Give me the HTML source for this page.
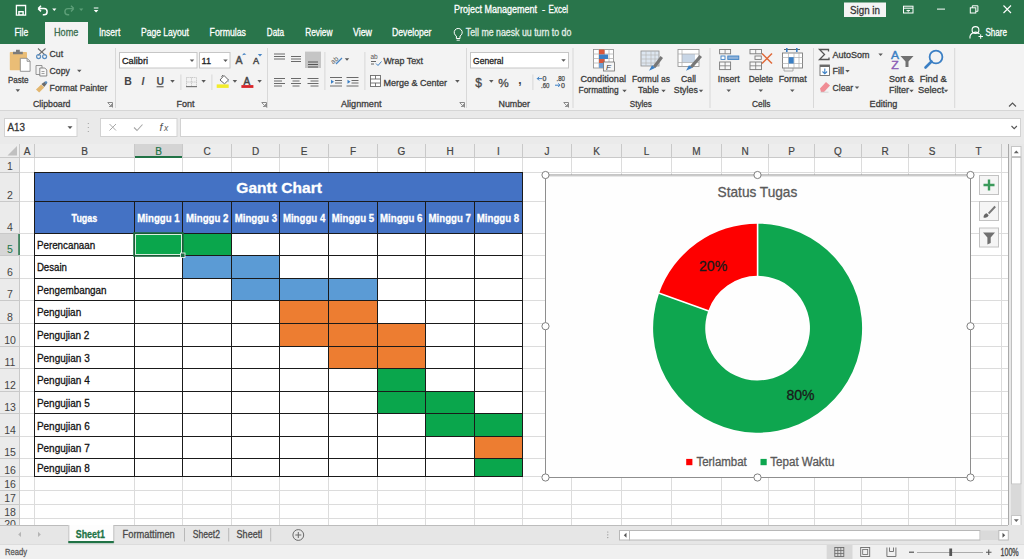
<!DOCTYPE html>
<html><head><meta charset="utf-8">
<style>
html,body{margin:0;padding:0;width:1024px;height:559px;overflow:hidden;background:#fff}
svg{display:block}
text{font-family:"Liberation Sans",sans-serif}
</style></head><body>
<svg width="1024" height="559" viewBox="0 0 1024 559">
<rect x="0" y="0" width="1024" height="44" fill="#29754b"/>
<rect x="45" y="22" width="43" height="22" fill="#f3f3f3"/>
<text x="454" y="12.9" font-size="10.2" fill="#fff" stroke="#fff" stroke-width="0.3" textLength="83" lengthAdjust="spacingAndGlyphs">Project Management</text>
<text x="542" y="12.9" font-size="10.2" fill="#fff" stroke="#fff" stroke-width="0.3" textLength="3.2" lengthAdjust="spacingAndGlyphs">-</text>
<text x="548.6" y="12.9" font-size="10.2" fill="#fff" stroke="#fff" stroke-width="0.3" textLength="19.5" lengthAdjust="spacingAndGlyphs">Excel</text>
<text x="14.4" y="36.2" font-size="10.6" fill="#fff" stroke="#fff" stroke-width="0.3" textLength="13.8" lengthAdjust="spacingAndGlyphs">File</text>
<text x="99" y="36.2" font-size="10.6" fill="#fff" stroke="#fff" stroke-width="0.3" textLength="21.3" lengthAdjust="spacingAndGlyphs">Insert</text>
<text x="141" y="36.2" font-size="10.6" fill="#fff" stroke="#fff" stroke-width="0.3" textLength="48" lengthAdjust="spacingAndGlyphs">Page Layout</text>
<text x="209.6" y="36.2" font-size="10.6" fill="#fff" stroke="#fff" stroke-width="0.3" textLength="36.4" lengthAdjust="spacingAndGlyphs">Formulas</text>
<text x="266.8" y="36.2" font-size="10.6" fill="#fff" stroke="#fff" stroke-width="0.3" textLength="17.2" lengthAdjust="spacingAndGlyphs">Data</text>
<text x="305.2" y="36.2" font-size="10.6" fill="#fff" stroke="#fff" stroke-width="0.3" textLength="27.3" lengthAdjust="spacingAndGlyphs">Review</text>
<text x="353" y="36.2" font-size="10.6" fill="#fff" stroke="#fff" stroke-width="0.3" textLength="19" lengthAdjust="spacingAndGlyphs">View</text>
<text x="392" y="36.2" font-size="10.6" fill="#fff" stroke="#fff" stroke-width="0.3" textLength="39.5" lengthAdjust="spacingAndGlyphs">Developer</text>
<text x="54" y="36.2" font-size="10.6" fill="#3a6e50" stroke="#3a6e50" stroke-width="0.3" textLength="24.4" lengthAdjust="spacingAndGlyphs">Home</text>
<text x="465.8" y="36.2" font-size="10.6" fill="#e3efe8" stroke="#e3efe8" stroke-width="0.3" textLength="105.5" lengthAdjust="spacingAndGlyphs">Tell me naesk uu turn to do</text>
<text x="985.4" y="36.2" font-size="10.6" fill="#fff" stroke="#fff" stroke-width="0.3" textLength="21.6" lengthAdjust="spacingAndGlyphs">Share</text>
<rect x="844" y="2.5" width="42" height="14.5" fill="#f4f4f4"/>
<text x="850" y="13.8" font-size="11.5" fill="#333" stroke="#333" stroke-width="0.3" textLength="30" lengthAdjust="spacingAndGlyphs">Sign in</text>
<rect x="0" y="44" width="1024" height="66" fill="#f3f3f3"/>
<rect x="0" y="110" width="1024" height="1" fill="#d6d6d6"/>
<rect x="9.8" y="51.9" width="17.2" height="18.3" rx="0.8" fill="#eabd76"/>
<path d="M13 54.2h9.8v-2.4h-3v-2h-3.8v2h-3z" fill="#7b7b7b"/>
<path d="M20.3 58.3h6.8l3 3v10h-9.8z" fill="#fff" stroke="#8a8a8a" stroke-width="0.9"/>
<path d="M27.1 58.3v3h3" fill="none" stroke="#8a8a8a" stroke-width="0.9"/>
<text x="7.9" y="82.5" font-size="9.2" fill="#3c3c3c" stroke="#3c3c3c" stroke-width="0.3" textLength="20.5" lengthAdjust="spacingAndGlyphs">Paste</text>
<path d="M15.55 89.30h4.5l-2.25 2.6z" fill="#5a5a5a"/>
<g fill="none" stroke="#6b6b6b" stroke-width="1.1"><path d="M38 48.5l7.5 6.8M45.5 48.5l-7.5 6.8"/></g>
<g fill="none" stroke="#5a8ec0" stroke-width="1.2"><circle cx="38.6" cy="56.6" r="2"/><circle cx="44.6" cy="56.6" r="2"/></g>
<text x="49.6" y="57.1" font-size="9.2" fill="#3c3c3c" stroke="#3c3c3c" stroke-width="0.3" textLength="13.5" lengthAdjust="spacingAndGlyphs">Cut</text>
<path d="M36 65.5h6v9h-6z" fill="#f3f3f3" stroke="#8a8a8a" stroke-width="0.9"/>
<path d="M39.8 68h5l2 2v6h-7z" fill="#f7f7f7" stroke="#7a7a7a" stroke-width="0.9"/>
<path d="M41.5 71.5h3M41.5 73.5h3" stroke="#8a8a8a" stroke-width="0.8"/>
<text x="49.6" y="73.6" font-size="9.2" fill="#3c3c3c" stroke="#3c3c3c" stroke-width="0.3" textLength="20.2" lengthAdjust="spacingAndGlyphs">Copy</text>
<path d="M77.05 69.70h4.5l-2.25 2.6z" fill="#5a5a5a"/>
<path d="M36 89.5l5.2-5 3 3-5 5z" fill="#e2b66f"/>
<path d="M41.5 84l3.5-2.5 2 2-2.8 3.4z" fill="#6b6b6b"/><circle cx="46" cy="82.5" r="1.3" fill="#5a8ec0"/>
<text x="49.6" y="90.7" font-size="9.2" fill="#3c3c3c" stroke="#3c3c3c" stroke-width="0.3" textLength="57.8" lengthAdjust="spacingAndGlyphs">Format Painter</text>
<text x="32.9" y="106.8" font-size="9.2" fill="#3c3c3c" stroke="#3c3c3c" stroke-width="0.3" textLength="37.6" lengthAdjust="spacingAndGlyphs">Clipboard</text>
<path d="M107.5 102.5h5v5" fill="none" stroke="#888" stroke-width="1"/><path d="M108 103l3.5 3.5M111.5 104v2.5h-2.5" fill="none" stroke="#888" stroke-width="0.9"/>
<rect x="115" y="48" width="1" height="60" fill="#d8d8d8"/>
<rect x="119.5" y="52.5" width="77.5" height="15.5" fill="#fff" stroke="#c6c6c6"/>
<rect x="199.5" y="52.5" width="30.5" height="15.5" fill="#fff" stroke="#c6c6c6"/>
<text x="122" y="63.5" font-size="9.2" fill="#222" stroke="#222" stroke-width="0.3" textLength="26" lengthAdjust="spacingAndGlyphs">Calibri</text>
<path d="M189.75 59.50h4.5l-2.25 2.6z" fill="#5a5a5a"/>
<text x="201.5" y="63.5" font-size="9.2" fill="#222" stroke="#222" stroke-width="0.3" textLength="9.5" lengthAdjust="spacingAndGlyphs">11</text>
<path d="M223.25 59.50h4.5l-2.25 2.6z" fill="#5a5a5a"/>
<text x="235.5" y="64" font-size="10.5" fill="#4a4a4a" stroke="#4a4a4a" stroke-width="0.45">A</text><path d="M242 55.2l2-2.2 2.4 1.6z" fill="#4a86c5"/>
<text x="253" y="64" font-size="9.2" fill="#4a4a4a" stroke="#4a4a4a" stroke-width="0.45">A</text><path d="M257.8 54h4.4l-2.2 2.4z" fill="#4a86c5"/>
<text x="124.2" y="85.3" font-size="10.5" font-weight="bold" fill="#444">B</text>
<text x="141.5" y="85.3" font-size="10.5" font-style="italic" font-weight="bold" fill="#505050">I</text>
<text x="156.5" y="85" font-size="10.5" font-weight="bold" fill="#505050">U</text><rect x="156.6" y="86.2" width="7" height="1.1" fill="#555"/>
<path d="M170.25 80.10h4.5l-2.25 2.6z" fill="#5a5a5a"/>
<rect x="180.4" y="74.5" width="1" height="15.5" fill="#d8d8d8"/>
<g stroke="#c4c4c4" stroke-width="0.9" fill="none" stroke-dasharray="1.2 0.6"><path d="M186.5 77.5h10v9M186.5 77.5v9M191.5 77.5v9M186.5 82h10"/></g><rect x="186" y="86" width="11" height="1.2" fill="#777"/>
<path d="M201.35 80.10h4.5l-2.25 2.6z" fill="#5a5a5a"/>
<rect x="211.4" y="74.5" width="1" height="15.5" fill="#d8d8d8"/>
<path d="M220 80l4-4.5 4.5 4.5-4 3.8z" fill="#fff" stroke="#555" stroke-width="0.9"/><path d="M221.5 76.8l1.5-1.8" stroke="#555" stroke-width="0.9"/><path d="M228.5 79.5q1 1.5 0 3" fill="#4a86c5"/>
<rect x="216.7" y="84.4" width="12" height="3.5" fill="#f2ec2a"/>
<path d="M232.65 80.10h4.5l-2.25 2.6z" fill="#5a5a5a"/>
<text x="243.6" y="84.5" font-size="10" fill="#444" stroke="#444" stroke-width="0.45">A</text><rect x="241.4" y="85.1" width="12" height="2.8" fill="#d9252a"/>
<path d="M257.35 80.10h4.5l-2.25 2.6z" fill="#5a5a5a"/>
<text x="176.4" y="106.8" font-size="9.2" fill="#3c3c3c" stroke="#3c3c3c" stroke-width="0.3" textLength="18" lengthAdjust="spacingAndGlyphs">Font</text>
<path d="M261.5 102.5h5v5" fill="none" stroke="#888" stroke-width="1"/><path d="M262 103l3.5 3.5M265.5 104v2.5h-2.5" fill="none" stroke="#888" stroke-width="0.9"/>
<rect x="267" y="48" width="1" height="60" fill="#d8d8d8"/>
<g stroke="#6a6a6a" stroke-width="1"><path d="M274 54h11M274 56.5h11M274 59h11"/><path d="M291 56.5h10M291 59h10M291 61.5h10"/></g>
<rect x="305" y="51.6" width="16" height="16.4" fill="#c5c5c5"/>
<path d="M308 62h10M308 64.5h10M308 67h10" stroke="#555" stroke-width="1"/>
<text x="330" y="62" font-size="7" fill="#555" transform="rotate(-40 335 59)">ab</text><path d="M336 64l6-6" stroke="#4a86c5" stroke-width="1.2"/>
<path d="M344.75 58.20h4.5l-2.25 2.6z" fill="#5a5a5a"/>
<rect x="324.4" y="52" width="1" height="38" fill="#d8d8d8"/>
<g stroke="#6a6a6a" stroke-width="1"><path d="M274 78.5h11M274 81h8M274 83.5h11M274 86h8"/><path d="M291 78.5h10M292.5 81h7M291 83.5h10M292.5 86h7"/><path d="M307.5 78.5h11M310.5 81h8M307.5 83.5h11M310.5 86h8"/></g>
<g stroke="#6a6a6a" stroke-width="1"><path d="M330 77.5h12M335 80.5h7M335 83h7M330 86h12"/><path d="M346.5 77.5h12M351.5 80.5h7M351.5 83h7M346.5 86h12"/></g>
<path d="M334 81.8l-3-2v4z" fill="#3b7fc4"/><path d="M347.5 79.8l3 2-3 2z" fill="#3b7fc4"/>
<rect x="364.4" y="52" width="1" height="38" fill="#d8d8d8"/>
<text x="370.5" y="58.5" font-size="6.5" fill="#555">ab</text><path d="M371 61.5h5M371 64h3" stroke="#555" stroke-width="0.9"/><path d="M376 63.5l2 2 3.5-4" fill="none" stroke="#3b7fc4" stroke-width="1"/>
<text x="383.4" y="63.5" font-size="9.2" fill="#3c3c3c" stroke="#3c3c3c" stroke-width="0.3" textLength="39.6" lengthAdjust="spacingAndGlyphs">Wrap Text</text>
<rect x="370.5" y="75.5" width="10" height="11" fill="#fff" stroke="#6a6a6a" stroke-width="0.9"/><path d="M370.5 79h10M370.5 83h10M375.5 75.5v3.5M375.5 83v3.5" stroke="#6a6a6a" stroke-width="0.9"/>
<text x="383.4" y="85.5" font-size="9.2" fill="#3c3c3c" stroke="#3c3c3c" stroke-width="0.3" textLength="63.6" lengthAdjust="spacingAndGlyphs">Merge &amp; Center</text>
<path d="M455.15 80.10h4.5l-2.25 2.6z" fill="#5a5a5a"/>
<text x="341" y="106.8" font-size="9.2" fill="#3c3c3c" stroke="#3c3c3c" stroke-width="0.3" textLength="40.5" lengthAdjust="spacingAndGlyphs">Alignment</text>
<path d="M459.5 102.5h5v5" fill="none" stroke="#888" stroke-width="1"/><path d="M460 103l3.5 3.5M463.5 104v2.5h-2.5" fill="none" stroke="#888" stroke-width="0.9"/>
<rect x="466" y="48" width="1" height="60" fill="#d8d8d8"/>
<rect x="470.5" y="52.5" width="98" height="15.5" fill="#fff" stroke="#c6c6c6"/>
<text x="473" y="63.5" font-size="9.2" fill="#222" stroke="#222" stroke-width="0.3" textLength="30.5" lengthAdjust="spacingAndGlyphs">General</text>
<path d="M561.25 59.20h4.5l-2.25 2.6z" fill="#5a5a5a"/>
<text x="475.2" y="86.8" font-size="12" fill="#4a4a4a" stroke="#4a4a4a" stroke-width="0.3">$</text>
<path d="M489.05 80.10h4.5l-2.25 2.6z" fill="#5a5a5a"/>
<text x="498.3" y="86.5" font-size="11.5" fill="#4a4a4a" stroke="#4a4a4a" stroke-width="0.3" textLength="10.5" lengthAdjust="spacingAndGlyphs">%</text>
<text x="518.3" y="83.5" font-size="12" font-weight="bold" fill="#444">,</text>
<rect x="532.4" y="74.5" width="1" height="15.5" fill="#d8d8d8"/>
<text x="542.5" y="81.2" font-size="7" fill="#4a4a4a" stroke="#4a4a4a" stroke-width="0.25">0</text><text x="541" y="87.8" font-size="7" fill="#4a4a4a" stroke="#4a4a4a" stroke-width="0.25" textLength="8.5" lengthAdjust="spacingAndGlyphs">.60</text><path d="M537.3 78.6h5M537.3 78.6l1.8-1.8M537.3 78.6l1.8 1.8" stroke="#3b7fc4" stroke-width="1" fill="none"/>
<text x="556.5" y="81.2" font-size="7" fill="#4a4a4a" stroke="#4a4a4a" stroke-width="0.25" textLength="8.5" lengthAdjust="spacingAndGlyphs">.80</text><text x="561" y="87.8" font-size="7" fill="#4a4a4a" stroke="#4a4a4a" stroke-width="0.25">0</text><path d="M555 85.2h5M560 85.2l-1.8-1.8M560 85.2l-1.8 1.8" stroke="#3b7fc4" stroke-width="1" fill="none"/>
<text x="498.5" y="106.8" font-size="9.2" fill="#3c3c3c" stroke="#3c3c3c" stroke-width="0.3" textLength="31.5" lengthAdjust="spacingAndGlyphs">Number</text>
<path d="M563.5 102.5h5v5" fill="none" stroke="#888" stroke-width="1"/><path d="M564 103l3.5 3.5M567.5 104v2.5h-2.5" fill="none" stroke="#888" stroke-width="0.9"/>
<rect x="572.5" y="48" width="1" height="60" fill="#d8d8d8"/>
<g fill="#fff" stroke="#8c8c8c" stroke-width="0.8"><rect x="593.5" y="49.5" width="20" height="18.5"/></g>
<path d="M593.5 54h20M593.5 58.5h20M593.5 63h20M599 49.5v18.5M604.5 49.5v18.5M609 49.5v18.5" stroke="#b5b5b5" stroke-width="0.8"/>
<rect x="599" y="49.5" width="5.5" height="5" fill="#d9573b"/><rect x="599" y="54.5" width="9" height="4.5" fill="#3b7fc4"/><rect x="599" y="59" width="5.5" height="4" fill="#d9573b"/><rect x="599" y="63" width="5.5" height="5" fill="#6f9fd3"/>
<rect x="603.5" y="62" width="11" height="9" fill="#f6f6f6" stroke="#707070" stroke-width="0.8"/><text x="606" y="69.8" font-size="8" font-style="italic" fill="#333" font-family="Liberation Serif">F</text>
<text x="580.4" y="82" font-size="9.2" fill="#3c3c3c" stroke="#3c3c3c" stroke-width="0.3" textLength="45.6" lengthAdjust="spacingAndGlyphs">Conditional</text>
<text x="578.6" y="93.4" font-size="9.2" fill="#3c3c3c" stroke="#3c3c3c" stroke-width="0.3" textLength="40" lengthAdjust="spacingAndGlyphs">Formatting</text>
<path d="M622.25 89.70h4.5l-2.25 2.6z" fill="#5a5a5a"/>
<rect x="641" y="51" width="18" height="15" fill="#dde6f0" stroke="#8c8c8c" stroke-width="0.8"/><path d="M641 55h18M641 59h18M641 63h18M646 51v15M651 51v15M655 51v15" stroke="#b8b8b8" stroke-width="0.7"/>
<path d="M649 70.7l3-5.5 3.5 2.5z" fill="#3b7fc4"/><path d="M653 66l7.5-10 2.5 2-7.5 10z" fill="#777"/>
<text x="632" y="82" font-size="9.2" fill="#3c3c3c" stroke="#3c3c3c" stroke-width="0.3" textLength="38" lengthAdjust="spacingAndGlyphs">Formul as</text>
<text x="638" y="93.4" font-size="9.2" fill="#3c3c3c" stroke="#3c3c3c" stroke-width="0.3" textLength="21" lengthAdjust="spacingAndGlyphs">Table</text>
<path d="M661.25 89.70h4.5l-2.25 2.6z" fill="#5a5a5a"/>
<rect x="678" y="49.5" width="21" height="17" fill="#fff" stroke="#8c8c8c" stroke-width="0.8"/><rect x="682" y="54" width="13" height="8.5" fill="#c8d6e6"/><path d="M678 54h21M678 62.5h21M682 49.5v17" stroke="#aaa" stroke-width="0.7"/>
<path d="M686 70.7l3-5.5 3.5 2.5z" fill="#3b7fc4"/><path d="M690 66l9.5-11 2.5 2-9.5 11z" fill="#777"/>
<text x="681" y="82" font-size="9.2" fill="#3c3c3c" stroke="#3c3c3c" stroke-width="0.3" textLength="15" lengthAdjust="spacingAndGlyphs">Call</text>
<text x="673.8" y="93.4" font-size="9.2" fill="#3c3c3c" stroke="#3c3c3c" stroke-width="0.3" textLength="24" lengthAdjust="spacingAndGlyphs">Styles</text>
<path d="M698.75 89.70h4.5l-2.25 2.6z" fill="#5a5a5a"/>
<text x="629.8" y="106.8" font-size="9.2" fill="#3c3c3c" stroke="#3c3c3c" stroke-width="0.3" textLength="22" lengthAdjust="spacingAndGlyphs">Styles</text>
<rect x="709.5" y="48" width="1" height="60" fill="#d8d8d8"/>
<g fill="#f7f7f7" stroke="#7a7a7a" stroke-width="0.9"><rect x="719.6" y="49.5" width="11" height="4.3"/><rect x="719.6" y="62" width="11" height="7.6"/></g><path d="M725.1 49.5v4.3M725.1 62v7.6M719.6 65.8h11" stroke="#7a7a7a" stroke-width="0.8"/>
<rect x="721" y="56" width="4" height="3.4" fill="#fff" stroke="#3b7fc4" stroke-width="0.9"/><rect x="727.8" y="56" width="11" height="3.4" fill="#8fb2d9" stroke="#3b7fc4" stroke-width="0.9"/>
<text x="717.7" y="82" font-size="9.2" fill="#3c3c3c" stroke="#3c3c3c" stroke-width="0.3" textLength="22" lengthAdjust="spacingAndGlyphs">Insert</text>
<path d="M726.45 89.50h4.5l-2.25 2.6z" fill="#5a5a5a"/>
<g fill="#f7f7f7" stroke="#7a7a7a" stroke-width="0.9"><rect x="750" y="49.5" width="11.5" height="4.3"/><rect x="755" y="56" width="6.3" height="3.4"/><rect x="750" y="62" width="11.5" height="7.6"/></g><path d="M755.7 49.5v4.3M755.7 62v7.6M750 65.8h11.5" stroke="#7a7a7a" stroke-width="0.8"/>
<path d="M762 53.5l10 10M772 53.5l-10 10" stroke="#e06a3a" stroke-width="1.5"/>
<text x="748.7" y="82" font-size="9.2" fill="#3c3c3c" stroke="#3c3c3c" stroke-width="0.3" textLength="24.3" lengthAdjust="spacingAndGlyphs">Delete</text>
<path d="M758.55 89.50h4.5l-2.25 2.6z" fill="#5a5a5a"/>
<rect x="782.5" y="53" width="20" height="15" fill="#fff" stroke="#7a7a7a" stroke-width="0.9"/><path d="M782.5 57.5h20M782.5 63.5h20M788.5 53v15M794 53v15M799 53v15" stroke="#b0b0b0" stroke-width="0.7"/><rect x="788.7" y="57.2" width="5" height="6.3" fill="#3b7fc4"/>
<path d="M784 49.5h16" stroke="#555" stroke-width="0.9"/><rect x="786" y="48" width="1.6" height="4" fill="#3b7fc4"/><rect x="796" y="48" width="1.6" height="4" fill="#3b7fc4"/>
<path d="M784 68v3h9v-3" fill="none" stroke="#9a9a9a" stroke-width="0.8"/>
<text x="778.7" y="82" font-size="9.2" fill="#3c3c3c" stroke="#3c3c3c" stroke-width="0.3" textLength="28" lengthAdjust="spacingAndGlyphs">Format</text>
<path d="M790.05 89.50h4.5l-2.25 2.6z" fill="#5a5a5a"/>
<text x="752" y="106.8" font-size="9.2" fill="#3c3c3c" stroke="#3c3c3c" stroke-width="0.3" textLength="18.5" lengthAdjust="spacingAndGlyphs">Cells</text>
<rect x="813" y="48" width="1" height="60" fill="#d8d8d8"/>
<path d="M828.5 51.5v-2h-9l5 5-5 5h9.5v-2" fill="none" stroke="#555" stroke-width="1.3"/>
<text x="832.6" y="57.8" font-size="9.2" fill="#3c3c3c" stroke="#3c3c3c" stroke-width="0.3" textLength="37" lengthAdjust="spacingAndGlyphs">AutoSom</text>
<path d="M878.35 53.50h4.5l-2.25 2.6z" fill="#5a5a5a"/>
<rect x="820" y="65" width="9.5" height="10.5" fill="#fff" stroke="#6a6a6a" stroke-width="0.9"/><rect x="820" y="65" width="9.5" height="2" fill="#6a6a6a"/><path d="M824.8 68.5v5M822.5 71.5l2.3 2.3 2.3-2.3" fill="none" stroke="#3b7fc4" stroke-width="1.1"/>
<text x="832.6" y="74.2" font-size="9.2" fill="#3c3c3c" stroke="#3c3c3c" stroke-width="0.3" textLength="11.5" lengthAdjust="spacingAndGlyphs">Fill</text>
<path d="M845.25 69.90h4.5l-2.25 2.6z" fill="#5a5a5a"/>
<path d="M820 88.5l6-6.5 4 3.5-6 6.5h-3z" fill="#f08d95"/><path d="M820.5 92.2h8" stroke="#ccc" stroke-width="0.8"/>
<text x="832.6" y="90.8" font-size="9.2" fill="#3c3c3c" stroke="#3c3c3c" stroke-width="0.3" textLength="20.5" lengthAdjust="spacingAndGlyphs">Clear</text>
<path d="M854.75 86.50h4.5l-2.25 2.6z" fill="#5a5a5a"/>
<text x="891" y="58.8" font-size="11" fill="#3b7fc4" stroke="#3b7fc4" stroke-width="0.4" textLength="8" lengthAdjust="spacingAndGlyphs">A</text><text x="891.3" y="68.5" font-size="11" fill="#8a5bb5" stroke="#8a5bb5" stroke-width="0.4" textLength="7.5" lengthAdjust="spacingAndGlyphs">Z</text>
<path d="M900.5 56h13l-5 5.5v5.5h-3v-5.5z" fill="#707070"/>
<text x="889" y="82" font-size="9.2" fill="#3c3c3c" stroke="#3c3c3c" stroke-width="0.3" textLength="25" lengthAdjust="spacingAndGlyphs">Sort &amp;</text>
<text x="889" y="93.4" font-size="9.2" fill="#3c3c3c" stroke="#3c3c3c" stroke-width="0.3" textLength="20" lengthAdjust="spacingAndGlyphs">Filter</text>
<path d="M909.25 89.70h4.5l-2.25 2.6z" fill="#5a5a5a"/>
<circle cx="936" cy="57" r="6.4" fill="none" stroke="#3b7fc4" stroke-width="1.8"/><path d="M931.5 61.5l-6 6" stroke="#3b7fc4" stroke-width="2.6" stroke-linecap="round"/>
<text x="919.7" y="82" font-size="9.2" fill="#3c3c3c" stroke="#3c3c3c" stroke-width="0.3" textLength="27.2" lengthAdjust="spacingAndGlyphs">Find &amp;</text>
<text x="918" y="93.4" font-size="9.2" fill="#3c3c3c" stroke="#3c3c3c" stroke-width="0.3" textLength="26" lengthAdjust="spacingAndGlyphs">Select</text>
<path d="M943.75 89.70h4.5l-2.25 2.6z" fill="#5a5a5a"/>
<text x="869.6" y="106.8" font-size="9.2" fill="#3c3c3c" stroke="#3c3c3c" stroke-width="0.3" textLength="27.8" lengthAdjust="spacingAndGlyphs">Editing</text>
<rect x="954.2" y="48" width="1" height="60" fill="#d8d8d8"/>
<path d="M1009 106.5l3.5-3.5 3.5 3.5" fill="none" stroke="#555" stroke-width="1.1"/>
<rect x="0" y="111" width="1024" height="33" fill="#eaeaea"/>
<rect x="4.5" y="118.5" width="72.5" height="18" fill="#fff" stroke="#d2d2d2"/>
<rect x="100.5" y="118.5" width="76.5" height="18" fill="#fff" stroke="#d2d2d2"/>
<rect x="180.5" y="118.5" width="840" height="18" fill="#fff" stroke="#d2d2d2"/>
<rect x="0" y="144" width="1008" height="381" fill="#fff"/>
<rect x="0" y="144" width="1008" height="14" fill="#ededed"/>
<rect x="0" y="158" width="20" height="367" fill="#ebebeb"/>
<g stroke="#dcdcdc" stroke-width="1"><line x1="34.5" y1="158" x2="34.5" y2="525"/><line x1="134.5" y1="158" x2="134.5" y2="525"/><line x1="182.5" y1="158" x2="182.5" y2="525"/><line x1="231.5" y1="158" x2="231.5" y2="525"/><line x1="279.5" y1="158" x2="279.5" y2="525"/><line x1="328.5" y1="158" x2="328.5" y2="525"/><line x1="377.5" y1="158" x2="377.5" y2="525"/><line x1="425.5" y1="158" x2="425.5" y2="525"/><line x1="474.5" y1="158" x2="474.5" y2="525"/><line x1="522.5" y1="158" x2="522.5" y2="525"/><line x1="571.5" y1="158" x2="571.5" y2="525"/><line x1="621.5" y1="158" x2="621.5" y2="525"/><line x1="671.5" y1="158" x2="671.5" y2="525"/><line x1="721.5" y1="158" x2="721.5" y2="525"/><line x1="768.5" y1="158" x2="768.5" y2="525"/><line x1="814.5" y1="158" x2="814.5" y2="525"/><line x1="861.5" y1="158" x2="861.5" y2="525"/><line x1="908.5" y1="158" x2="908.5" y2="525"/><line x1="955.5" y1="158" x2="955.5" y2="525"/><line x1="1001.5" y1="158" x2="1001.5" y2="525"/><line x1="20" y1="172.5" x2="1008" y2="172.5"/><line x1="20" y1="201.5" x2="1008" y2="201.5"/><line x1="20" y1="233.5" x2="1008" y2="233.5"/><line x1="20" y1="255.5" x2="1008" y2="255.5"/><line x1="20" y1="278.5" x2="1008" y2="278.5"/><line x1="20" y1="300.5" x2="1008" y2="300.5"/><line x1="20" y1="323.5" x2="1008" y2="323.5"/><line x1="20" y1="346.5" x2="1008" y2="346.5"/><line x1="20" y1="368.5" x2="1008" y2="368.5"/><line x1="20" y1="391.5" x2="1008" y2="391.5"/><line x1="20" y1="413.5" x2="1008" y2="413.5"/><line x1="20" y1="436.5" x2="1008" y2="436.5"/><line x1="20" y1="458.5" x2="1008" y2="458.5"/><line x1="20" y1="476.5" x2="1008" y2="476.5"/><line x1="20" y1="490.5" x2="1008" y2="490.5"/><line x1="20" y1="504.5" x2="1008" y2="504.5"/><line x1="20" y1="518.5" x2="1008" y2="518.5"/></g>
<g stroke="#c9c9c9" stroke-width="1"><line x1="19.5" y1="144" x2="19.5" y2="158"/><line x1="34.5" y1="144" x2="34.5" y2="158"/><line x1="134.5" y1="144" x2="134.5" y2="158"/><line x1="182.5" y1="144" x2="182.5" y2="158"/><line x1="231.5" y1="144" x2="231.5" y2="158"/><line x1="279.5" y1="144" x2="279.5" y2="158"/><line x1="328.5" y1="144" x2="328.5" y2="158"/><line x1="377.5" y1="144" x2="377.5" y2="158"/><line x1="425.5" y1="144" x2="425.5" y2="158"/><line x1="474.5" y1="144" x2="474.5" y2="158"/><line x1="522.5" y1="144" x2="522.5" y2="158"/><line x1="571.5" y1="144" x2="571.5" y2="158"/><line x1="621.5" y1="144" x2="621.5" y2="158"/><line x1="671.5" y1="144" x2="671.5" y2="158"/><line x1="721.5" y1="144" x2="721.5" y2="158"/><line x1="768.5" y1="144" x2="768.5" y2="158"/><line x1="814.5" y1="144" x2="814.5" y2="158"/><line x1="861.5" y1="144" x2="861.5" y2="158"/><line x1="908.5" y1="144" x2="908.5" y2="158"/><line x1="955.5" y1="144" x2="955.5" y2="158"/><line x1="1001.5" y1="144" x2="1001.5" y2="158"/><line x1="0" y1="172.5" x2="20" y2="172.5"/><line x1="0" y1="201.5" x2="20" y2="201.5"/><line x1="0" y1="233.5" x2="20" y2="233.5"/><line x1="0" y1="255.5" x2="20" y2="255.5"/><line x1="0" y1="278.5" x2="20" y2="278.5"/><line x1="0" y1="300.5" x2="20" y2="300.5"/><line x1="0" y1="323.5" x2="20" y2="323.5"/><line x1="0" y1="346.5" x2="20" y2="346.5"/><line x1="0" y1="368.5" x2="20" y2="368.5"/><line x1="0" y1="391.5" x2="20" y2="391.5"/><line x1="0" y1="413.5" x2="20" y2="413.5"/><line x1="0" y1="436.5" x2="20" y2="436.5"/><line x1="0" y1="458.5" x2="20" y2="458.5"/><line x1="0" y1="476.5" x2="20" y2="476.5"/><line x1="0" y1="490.5" x2="20" y2="490.5"/><line x1="0" y1="504.5" x2="20" y2="504.5"/><line x1="0" y1="518.5" x2="20" y2="518.5"/><line x1="0" y1="157.5" x2="1008" y2="157.5"/><line x1="19.5" y1="144" x2="19.5" y2="525"/></g>
<rect x="135" y="144" width="47" height="12" fill="#d4d4d4"/><rect x="135" y="156" width="47" height="2" fill="#217346"/>
<rect x="0" y="234" width="19" height="21" fill="#d6d6d6"/><rect x="18.3" y="234" width="1.5" height="21" fill="#217346"/>
<text x="27.0" y="155" font-size="10" fill="#444" stroke="#444" stroke-width="0.2" text-anchor="middle">A</text>
<text x="84.5" y="155" font-size="10" fill="#444" stroke="#444" stroke-width="0.2" text-anchor="middle">B</text>
<text x="158.5" y="155" font-size="10" fill="#217346" stroke="#217346" stroke-width="0.2" text-anchor="middle">B</text>
<text x="207.0" y="155" font-size="10" fill="#444" stroke="#444" stroke-width="0.2" text-anchor="middle">C</text>
<text x="255.5" y="155" font-size="10" fill="#444" stroke="#444" stroke-width="0.2" text-anchor="middle">D</text>
<text x="304.0" y="155" font-size="10" fill="#444" stroke="#444" stroke-width="0.2" text-anchor="middle">E</text>
<text x="353.0" y="155" font-size="10" fill="#444" stroke="#444" stroke-width="0.2" text-anchor="middle">F</text>
<text x="401.5" y="155" font-size="10" fill="#444" stroke="#444" stroke-width="0.2" text-anchor="middle">G</text>
<text x="450.0" y="155" font-size="10" fill="#444" stroke="#444" stroke-width="0.2" text-anchor="middle">H</text>
<text x="498.5" y="155" font-size="10" fill="#444" stroke="#444" stroke-width="0.2" text-anchor="middle">I</text>
<text x="547.0" y="155" font-size="10" fill="#444" stroke="#444" stroke-width="0.2" text-anchor="middle">J</text>
<text x="596.5" y="155" font-size="10" fill="#444" stroke="#444" stroke-width="0.2" text-anchor="middle">K</text>
<text x="646.5" y="155" font-size="10" fill="#444" stroke="#444" stroke-width="0.2" text-anchor="middle">L</text>
<text x="696.5" y="155" font-size="10" fill="#444" stroke="#444" stroke-width="0.2" text-anchor="middle">M</text>
<text x="745.0" y="155" font-size="10" fill="#444" stroke="#444" stroke-width="0.2" text-anchor="middle">N</text>
<text x="791.5" y="155" font-size="10" fill="#444" stroke="#444" stroke-width="0.2" text-anchor="middle">P</text>
<text x="838.0" y="155" font-size="10" fill="#444" stroke="#444" stroke-width="0.2" text-anchor="middle">Q</text>
<text x="885.0" y="155" font-size="10" fill="#444" stroke="#444" stroke-width="0.2" text-anchor="middle">R</text>
<text x="932.0" y="155" font-size="10" fill="#444" stroke="#444" stroke-width="0.2" text-anchor="middle">S</text>
<text x="978.5" y="155" font-size="10" fill="#444" stroke="#444" stroke-width="0.2" text-anchor="middle">T</text>
<text x="10" y="170.0" font-size="10.5" fill="#444" text-anchor="middle">1</text>
<text x="10" y="199.0" font-size="10.5" fill="#444" text-anchor="middle">2</text>
<text x="10" y="231.0" font-size="10.5" fill="#444" text-anchor="middle">4</text>
<text x="10" y="253.0" font-size="10.5" fill="#217346" text-anchor="middle">5</text>
<text x="10" y="276.0" font-size="10.5" fill="#444" text-anchor="middle">6</text>
<text x="10" y="298.0" font-size="10.5" fill="#444" text-anchor="middle">7</text>
<text x="10" y="321.0" font-size="10.5" fill="#444" text-anchor="middle">8</text>
<text x="10" y="344.0" font-size="10.5" fill="#444" text-anchor="middle">10</text>
<text x="10" y="366.0" font-size="10.5" fill="#444" text-anchor="middle">11</text>
<text x="10" y="389.0" font-size="10.5" fill="#444" text-anchor="middle">12</text>
<text x="10" y="411.0" font-size="10.5" fill="#444" text-anchor="middle">13</text>
<text x="10" y="434.0" font-size="10.5" fill="#444" text-anchor="middle">14</text>
<text x="10" y="456.0" font-size="10.5" fill="#444" text-anchor="middle">15</text>
<text x="10" y="474.0" font-size="10.5" fill="#444" text-anchor="middle">16</text>
<text x="10" y="488.0" font-size="10.5" fill="#444" text-anchor="middle">16</text>
<text x="10" y="502.0" font-size="10.5" fill="#444" text-anchor="middle">17</text>
<text x="10" y="516.0" font-size="10.5" fill="#444" text-anchor="middle">18</text>
<text x="10" y="528" font-size="10.5" fill="#444" text-anchor="middle">20</text>
<rect x="35" y="173" width="487" height="60" fill="#4472c4"/>
<rect x="135" y="234" width="47" height="21" fill="#0aa64c"/>
<rect x="183" y="234" width="48" height="21" fill="#0aa64c"/>
<rect x="183" y="256" width="48" height="22" fill="#5b9bd5"/>
<rect x="232" y="256" width="47" height="22" fill="#5b9bd5"/>
<rect x="232" y="279" width="47" height="21" fill="#5b9bd5"/>
<rect x="280" y="279" width="48" height="21" fill="#5b9bd5"/>
<rect x="329" y="279" width="48" height="21" fill="#5b9bd5"/>
<rect x="280" y="301" width="48" height="22" fill="#ed7d31"/>
<rect x="329" y="301" width="48" height="22" fill="#ed7d31"/>
<rect x="280" y="324" width="48" height="22" fill="#ed7d31"/>
<rect x="329" y="324" width="48" height="22" fill="#ed7d31"/>
<rect x="378" y="324" width="47" height="22" fill="#ed7d31"/>
<rect x="329" y="347" width="48" height="21" fill="#ed7d31"/>
<rect x="378" y="347" width="47" height="21" fill="#ed7d31"/>
<rect x="378" y="369" width="47" height="22" fill="#0aa64c"/>
<rect x="378" y="392" width="47" height="21" fill="#0aa64c"/>
<rect x="426" y="392" width="48" height="21" fill="#0aa64c"/>
<rect x="426" y="414" width="48" height="22" fill="#0aa64c"/>
<rect x="475" y="414" width="47" height="22" fill="#0aa64c"/>
<rect x="475" y="437" width="47" height="21" fill="#ed7d31"/>
<rect x="475" y="459" width="47" height="17" fill="#0aa64c"/>
<g stroke="#1a1a1a" stroke-width="1"><rect x="34.5" y="172.5" width="488" height="304" fill="none"/><line x1="134.5" y1="201.5" x2="134.5" y2="476.5"/><line x1="182.5" y1="201.5" x2="182.5" y2="476.5"/><line x1="231.5" y1="201.5" x2="231.5" y2="476.5"/><line x1="279.5" y1="201.5" x2="279.5" y2="476.5"/><line x1="328.5" y1="201.5" x2="328.5" y2="476.5"/><line x1="377.5" y1="201.5" x2="377.5" y2="476.5"/><line x1="425.5" y1="201.5" x2="425.5" y2="476.5"/><line x1="474.5" y1="201.5" x2="474.5" y2="476.5"/><line x1="34.5" y1="201.5" x2="522.5" y2="201.5"/><line x1="34.5" y1="233.5" x2="522.5" y2="233.5"/><line x1="34.5" y1="255.5" x2="522.5" y2="255.5"/><line x1="34.5" y1="278.5" x2="522.5" y2="278.5"/><line x1="34.5" y1="300.5" x2="522.5" y2="300.5"/><line x1="34.5" y1="323.5" x2="522.5" y2="323.5"/><line x1="34.5" y1="346.5" x2="522.5" y2="346.5"/><line x1="34.5" y1="368.5" x2="522.5" y2="368.5"/><line x1="34.5" y1="391.5" x2="522.5" y2="391.5"/><line x1="34.5" y1="413.5" x2="522.5" y2="413.5"/><line x1="34.5" y1="436.5" x2="522.5" y2="436.5"/><line x1="34.5" y1="458.5" x2="522.5" y2="458.5"/></g>
<rect x="134" y="233" width="49" height="23" fill="none" stroke="#1e6b40" stroke-width="1.6"/>
<rect x="135.5" y="234.5" width="46" height="20" fill="none" stroke="#d9efe0" stroke-width="1"/>
<rect x="180.5" y="253" width="4.5" height="4.5" fill="#1e6b40" stroke="#fff" stroke-width="0.8"/>
<text x="236.3" y="193.4" font-size="15.5" fill="#fff" font-weight="bold" stroke="#fff" stroke-width="0.3" textLength="85.6" lengthAdjust="spacingAndGlyphs">Gantt Chart</text>
<text x="71.6" y="221.8" font-size="11" fill="#fff" font-weight="bold" stroke="#fff" stroke-width="0.3" textLength="25.7" lengthAdjust="spacingAndGlyphs">Tugas</text>
<text x="137.3" y="221.8" font-size="11" fill="#fff" font-weight="bold" stroke="#fff" stroke-width="0.3" textLength="42.4" lengthAdjust="spacingAndGlyphs">Minggu 1</text>
<text x="186" y="221.8" font-size="11" fill="#fff" font-weight="bold" stroke="#fff" stroke-width="0.3" textLength="42.4" lengthAdjust="spacingAndGlyphs">Minggu 2</text>
<text x="234.7" y="221.8" font-size="11" fill="#fff" font-weight="bold" stroke="#fff" stroke-width="0.3" textLength="42.4" lengthAdjust="spacingAndGlyphs">Minggu 3</text>
<text x="282.9" y="221.8" font-size="11" fill="#fff" font-weight="bold" stroke="#fff" stroke-width="0.3" textLength="42.4" lengthAdjust="spacingAndGlyphs">Minggu 4</text>
<text x="331.8" y="221.8" font-size="11" fill="#fff" font-weight="bold" stroke="#fff" stroke-width="0.3" textLength="42.4" lengthAdjust="spacingAndGlyphs">Minggu 5</text>
<text x="380" y="221.8" font-size="11" fill="#fff" font-weight="bold" stroke="#fff" stroke-width="0.3" textLength="42.4" lengthAdjust="spacingAndGlyphs">Minggu 6</text>
<text x="428.5" y="221.8" font-size="11" fill="#fff" font-weight="bold" stroke="#fff" stroke-width="0.3" textLength="42.4" lengthAdjust="spacingAndGlyphs">Minggu 7</text>
<text x="476.8" y="221.8" font-size="11" fill="#fff" font-weight="bold" stroke="#fff" stroke-width="0.3" textLength="42.4" lengthAdjust="spacingAndGlyphs">Minggu 8</text>
<text x="36.9" y="248.8" font-size="11.5" fill="#111" stroke="#111" stroke-width="0.3" textLength="58.3" lengthAdjust="spacingAndGlyphs">Perencanaan</text>
<text x="36.9" y="271" font-size="11.5" fill="#111" stroke="#111" stroke-width="0.3" textLength="30.1" lengthAdjust="spacingAndGlyphs">Desain</text>
<text x="36.9" y="294.2" font-size="11.5" fill="#111" stroke="#111" stroke-width="0.3" textLength="69.7" lengthAdjust="spacingAndGlyphs">Pengembangan</text>
<text x="36.9" y="316.3" font-size="11.5" fill="#111" stroke="#111" stroke-width="0.3" textLength="44.3" lengthAdjust="spacingAndGlyphs">Pengujian</text>
<text x="36.9" y="339.3" font-size="11.5" fill="#111" stroke="#111" stroke-width="0.3" textLength="52.5" lengthAdjust="spacingAndGlyphs">Pengujian 2</text>
<text x="36.9" y="361.5" font-size="11.5" fill="#111" stroke="#111" stroke-width="0.3" textLength="52.8" lengthAdjust="spacingAndGlyphs">Pengujian 3</text>
<text x="36.9" y="383.9" font-size="11.5" fill="#111" stroke="#111" stroke-width="0.3" textLength="52.8" lengthAdjust="spacingAndGlyphs">Pengujian 4</text>
<text x="36.9" y="407" font-size="11.5" fill="#111" stroke="#111" stroke-width="0.3" textLength="52.8" lengthAdjust="spacingAndGlyphs">Pengujian 5</text>
<text x="36.9" y="429.5" font-size="11.5" fill="#111" stroke="#111" stroke-width="0.3" textLength="52.8" lengthAdjust="spacingAndGlyphs">Pengujian 6</text>
<text x="36.9" y="452" font-size="11.5" fill="#111" stroke="#111" stroke-width="0.3" textLength="52.8" lengthAdjust="spacingAndGlyphs">Pengujian 7</text>
<text x="36.9" y="472.1" font-size="11.5" fill="#111" stroke="#111" stroke-width="0.3" textLength="52.8" lengthAdjust="spacingAndGlyphs">Pengujian 8</text>
<path d="M16.4 5.5h9.2v9.6h-9.2z" fill="none" stroke="#fff" stroke-width="1.3"/><rect x="18.2" y="11" width="5.6" height="4.1" fill="#fff"/><rect x="19.6" y="12.4" width="2.8" height="1.8" fill="#29754b"/>
<path d="M38.2 8.6h5.8a3.1 3.1 0 0 1 0 6.2h-1.2M38.2 8.6l2.8-2.8M38.2 8.6l2.8 2.8" fill="none" stroke="#fff" stroke-width="1.5"/>
<path d="M52.20 8.60h4.2l-2.10 2.4z" fill="#fff"/>
<path d="M73.8 8.6h-5.8a3.1 3.1 0 0 0 0 6.2h1.2M73.8 8.6l-2.8-2.8M73.8 8.6l-2.8 2.8" fill="none" stroke="#5d9f78" stroke-width="1.4"/>
<path d="M79.10 8.60h4.2l-2.10 2.4z" fill="#5d9f78"/>
<rect x="93.8" y="7.5" width="4.6" height="1" fill="#fff"/>
<path d="M93.80 9.90h4.6l-2.30 2.6z" fill="#fff"/>
<rect x="903.5" y="6.2" width="9.5" height="6.8" fill="none" stroke="#fff" stroke-width="1"/><path d="M903.5 8.2h9.5" stroke="#fff"/><path d="M906.5 10.5h3.5M908.2 9.8v2.5" stroke="#fff" stroke-width="0.9"/>
<rect x="937" y="8.6" width="8" height="1" fill="#fff"/>
<rect x="970.3" y="7.8" width="5.5" height="5.2" fill="none" stroke="#fff" stroke-width="1"/><path d="M972.3 7.8v-2h5.6v5.5h-2.1" fill="none" stroke="#fff" stroke-width="1"/>
<path d="M1003.5 5.5l7.5 7.5M1011 5.5l-7.5 7.5" stroke="#fff" stroke-width="1.1"/>
<circle cx="975.5" cy="30" r="3.4" fill="none" stroke="#fff" stroke-width="1.1"/><path d="M970 38.5a5.5 5.5 0 0 1 9.5-4.5" fill="none" stroke="#fff" stroke-width="1.1"/><path d="M978.5 36.5h4.5M980.7 34.3v4.5" stroke="#fff" stroke-width="1"/>
<path d="M456.4 38.5v-2.5a4 4 0 1 1 3.6 0v2.5z" fill="none" stroke="#fff" stroke-width="1"/><path d="M456.6 40.2h3.2" stroke="#fff" stroke-width="0.9"/>
<text x="7.5" y="131" font-size="11" fill="#333" stroke="#333" stroke-width="0.3" textLength="17.5" lengthAdjust="spacingAndGlyphs">A13</text>
<path d="M67.50 126.20h5l-2.50 2.8z" fill="#555"/>
<circle cx="88.3" cy="123.5" r="0.6" fill="#999"/><circle cx="88.3" cy="127.5" r="0.6" fill="#999"/><circle cx="88.3" cy="131.5" r="0.6" fill="#999"/>
<path d="M109.5 124l6.5 6.5M116 124l-6.5 6.5" stroke="#a8a8a8" stroke-width="1"/>
<path d="M134 127.5l3 3 5.5-6" fill="none" stroke="#a8a8a8" stroke-width="1.1"/>
<text x="159.5" y="131.3" font-size="11" font-style="italic" fill="#555" font-family="Liberation Serif">f</text><text x="164" y="131.3" font-size="8.5" font-style="italic" fill="#555" font-family="Liberation Serif">x</text>
<path d="M1011.5 126l2.7 2.7 2.7-2.7" fill="none" stroke="#555" stroke-width="1.1"/>
<path d="M17 155.5v-9.5l-9.5 9.5z" fill="#c0c0c0"/>
<rect x="545.5" y="175" width="425.0" height="302.5" fill="#fefefe" stroke="#8e8e8e" stroke-width="1"/>
<line x1="545.5" y1="176" x2="970.5" y2="176" stroke="#cfcfcf" stroke-width="1"/>
<text x="717.6" y="197.3" font-size="14.2" fill="#595959" stroke="#595959" stroke-width="0.3" textLength="79.7" lengthAdjust="spacingAndGlyphs">Status Tugas</text>
<path d="M757.60 223.65A104.5 104.5 0 1 1 659.09 293.27L708.25 310.68A52.35 52.35 0 1 0 757.60 275.80Z" fill="#0ea64f"/>
<path d="M659.09 293.27A104.5 104.5 0 0 1 757.60 223.65L757.60 275.80A52.35 52.35 0 0 0 708.25 310.68Z" fill="#fe0000"/>
<path d="M757.60 222.65L757.60 276.80M658.59 293.07L708.75 310.88" stroke="#fff" stroke-width="1.6"/>
<text x="699" y="271.4" font-size="14.5" fill="#1a1a1a" stroke="#1a1a1a" stroke-width="0.3" textLength="28.2" lengthAdjust="spacingAndGlyphs">20%</text>
<text x="786.5" y="400.2" font-size="14.5" fill="#1a1a1a" stroke="#1a1a1a" stroke-width="0.3" textLength="28.1" lengthAdjust="spacingAndGlyphs">80%</text>
<rect x="686.2" y="458.9" width="6.2" height="6.3" fill="#fe0000"/>
<text x="696.4" y="465.6" font-size="12" fill="#595959" stroke="#595959" stroke-width="0.3" textLength="50.4" lengthAdjust="spacingAndGlyphs">Terlambat</text>
<rect x="760.5" y="458.9" width="6.2" height="6.3" fill="#0ea64f"/>
<text x="770.2" y="465.6" font-size="12" fill="#595959" stroke="#595959" stroke-width="0.3" textLength="64.2" lengthAdjust="spacingAndGlyphs">Tepat Waktu</text>
<circle cx="545.5" cy="175" r="3.6" fill="#fff" stroke="#808080" stroke-width="1"/>
<circle cx="757.5" cy="175" r="3.6" fill="#fff" stroke="#808080" stroke-width="1"/>
<circle cx="970.5" cy="175" r="3.6" fill="#fff" stroke="#808080" stroke-width="1"/>
<circle cx="545.5" cy="326.2" r="3.6" fill="#fff" stroke="#808080" stroke-width="1"/>
<circle cx="970.5" cy="326.2" r="3.6" fill="#fff" stroke="#808080" stroke-width="1"/>
<circle cx="545.5" cy="477.5" r="3.6" fill="#fff" stroke="#808080" stroke-width="1"/>
<circle cx="757.5" cy="477.5" r="3.6" fill="#fff" stroke="#808080" stroke-width="1"/>
<circle cx="970.5" cy="477.5" r="3.6" fill="#fff" stroke="#808080" stroke-width="1"/>
<rect x="979.5" y="175.5" width="19" height="19" fill="#f5f5f5" stroke="#c2c2c2" stroke-width="1"/>
<rect x="979.5" y="201.5" width="19" height="19" fill="#f5f5f5" stroke="#c2c2c2" stroke-width="1"/>
<rect x="979.5" y="228" width="19" height="19" fill="#f5f5f5" stroke="#c2c2c2" stroke-width="1"/>
<path d="M983.5 185h11M989 179.5v11" stroke="#3b9a5b" stroke-width="2.4"/>
<path d="M983.5 217.5q0-3.5 3.2-4.2l2 2q-1 3.2-5.2 2.2z" fill="#666"/><path d="M988 212.8l6.5-7 1.4 1.4-6.6 7z" fill="#777"/>
<path d="M983 232.5h12l-4.3 5v5.5l-3.3 1.5v-7z" fill="#707070"/>
<rect x="1008" y="144" width="16" height="381" fill="#e8e8e8"/>
<rect x="1008" y="144" width="1" height="381" fill="#a9a9a9"/>
<rect x="1011.5" y="146.5" width="9.5" height="10" fill="#fff" stroke="#c6c6c6" stroke-width="1"/><path d="M1013.8 153.2h5l-2.5-2.7z" fill="#666"/>
<rect x="1011.5" y="157.5" width="9.5" height="326.5" fill="#fff" stroke="#c0c0c0" stroke-width="1"/>
<rect x="1011" y="485" width="10.5" height="30" fill="#d9d9d9"/>
<rect x="1011.5" y="515.5" width="9.5" height="10" fill="#fff" stroke="#c6c6c6" stroke-width="1"/><path d="M1013.8 519.3h5l-2.5 2.7z" fill="#666"/>
<rect x="0" y="525" width="1024" height="19" fill="#e6e6e6"/>
<rect x="0" y="525" width="1008" height="1" fill="#bcbcbc"/>
<path d="M21 531.8v5.2l-2.8-2.6z" fill="#b5b5b5"/><path d="M38 531.8v5.2l2.8-2.6z" fill="#b5b5b5"/>
<rect x="68.3" y="525" width="45.5" height="18" fill="#fdfdfd"/><rect x="68.3" y="525" width="1" height="18" fill="#c0c0c0"/><rect x="113.3" y="525" width="1" height="18" fill="#c0c0c0"/>
<rect x="68.3" y="541" width="45.5" height="2.2" fill="#217346"/>
<text x="75.8" y="538.2" font-size="10.5" fill="#217346" font-weight="bold" stroke="#217346" stroke-width="0.3" textLength="29" lengthAdjust="spacingAndGlyphs">Sheet1</text>
<text x="122.6" y="538.2" font-size="10.2" fill="#4a4a4a" stroke="#4a4a4a" stroke-width="0.3" textLength="52.2" lengthAdjust="spacingAndGlyphs">Formattimen</text>
<rect x="184" y="528" width="1" height="13.5" fill="#b8b8b8"/>
<text x="192.8" y="538.2" font-size="10.2" fill="#4a4a4a" stroke="#4a4a4a" stroke-width="0.3" textLength="27.1" lengthAdjust="spacingAndGlyphs">Sheet2</text>
<rect x="228.2" y="528" width="1" height="13.5" fill="#b8b8b8"/>
<text x="236.6" y="538.2" font-size="10.2" fill="#4a4a4a" stroke="#4a4a4a" stroke-width="0.3" textLength="25.6" lengthAdjust="spacingAndGlyphs">Sheetl</text>
<rect x="270.2" y="528" width="1" height="13.5" fill="#b8b8b8"/>
<circle cx="298.3" cy="535" r="5.4" fill="none" stroke="#6a6a6a" stroke-width="1"/><path d="M295.3 535h6M298.3 532v6" stroke="#6a6a6a" stroke-width="1"/>
<circle cx="607.8" cy="532" r="0.6" fill="#888"/><circle cx="607.8" cy="534.8" r="0.6" fill="#888"/><circle cx="607.8" cy="537.6" r="0.6" fill="#888"/>
<rect x="619.5" y="530.5" width="10" height="9.5" fill="#fff" stroke="#b8b8b8" stroke-width="1"/><path d="M626.5 532.8v5l-2.7-2.5z" fill="#555"/>
<rect x="629.5" y="530.5" width="350.5" height="9.5" fill="#fff" stroke="#b8b8b8" stroke-width="1"/>
<rect x="980.5" y="530.5" width="18" height="9.5" fill="#dadada"/>
<rect x="998.8" y="530.5" width="9.5" height="9.5" fill="#fff" stroke="#b8b8b8" stroke-width="1"/><path d="M1002.5 532.8v5l2.7-2.5z" fill="#555"/>
<rect x="0" y="544" width="1024" height="15" fill="#f0f0f0"/>
<rect x="0" y="544" width="1024" height="1" fill="#dcdcdc"/>
<text x="5" y="555.2" font-size="8.8" fill="#5a5a5a" stroke="#5a5a5a" stroke-width="0.3" textLength="22" lengthAdjust="spacingAndGlyphs">Ready</text>
<rect x="826.7" y="545" width="25.8" height="14" fill="#d8d8d8"/>
<rect x="834.8" y="547.5" width="9" height="9" fill="none" stroke="#6a6a6a" stroke-width="0.9"/><path d="M837.8 547.5v9M840.8 547.5v9M834.8 550.5h9M834.8 553.5h9" stroke="#6a6a6a" stroke-width="0.8"/>
<rect x="860.7" y="547.5" width="9" height="9" fill="none" stroke="#6a6a6a" stroke-width="0.9"/><rect x="862.7" y="549.5" width="5" height="5" fill="none" stroke="#6a6a6a" stroke-width="0.8"/>
<path d="M886.9 547.5v9h9v-9M889.5 547.5v4h4v-4" fill="none" stroke="#6a6a6a" stroke-width="0.9"/>
<rect x="909" y="551.6" width="5" height="1.2" fill="#555"/>
<rect x="917" y="552" width="66" height="0.8" fill="#9a9a9a"/>
<rect x="949.3" y="548.5" width="2.8" height="7.5" fill="#555"/>
<path d="M986 552.2h5.5M988.75 549.5v5.5" stroke="#555" stroke-width="1.1"/>
<text x="1000.5" y="556.2" font-size="10" fill="#444" stroke="#444" stroke-width="0.3" textLength="18.2" lengthAdjust="spacingAndGlyphs">100%</text>
</svg>
</body></html>
